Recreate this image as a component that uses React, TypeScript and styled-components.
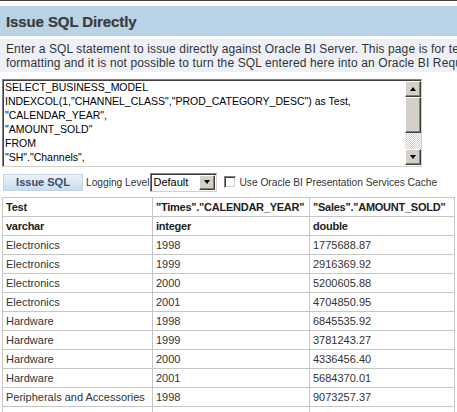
import { createGlobalStyle } from 'styled-components'
import styled from 'styled-components'

const GlobalStyle = createGlobalStyle`
  html, body {
    margin: 0;
    padding: 0;
    background: #fff;
  }
  body {
    font-family: "Liberation Sans", Arial, sans-serif;
    color: #333;
  }
`

/** page wrapper */
const Page = styled.div`
  width: 457px;
  height: 412px;
  overflow: hidden;
  border-top: 1px solid #404040;
  box-sizing: border-box;
`

/** title band */
const TitleBar = styled.div`
  margin-top: 5px;
  height: 30px;
  background: #b9d2e6;
  display: flex;
  align-items: center;
  padding-left: 6px;
`

const Title = styled.h1`
  margin: 0;
  font-size: 15px;
  font-weight: bold;
  color: #3a3a3a;
  letter-spacing: -0.1px;
  -webkit-text-stroke: 0.2px #3a3a3a;
`

/** description band */
const Intro = styled.div`
  margin-top: 3px;
  height: 33px;
  background: #eef0f8;
  padding: 3px 0 0 6px;
  box-sizing: border-box;
  font-size: 12px;
  line-height: 14px;
  letter-spacing: 0.12px;
  color: #333;
  white-space: nowrap;
  overflow: hidden;
`

/** sql editor */
const Editor = styled.div`
  margin: 7px 0 0 2px;
  width: 420px;
  height: 88px;
  box-sizing: border-box;
  display: flex;
  border-top: 1px solid #808080;
  border-left: 1px solid #808080;
  border-right: 1px solid #d4d0c8;
  border-bottom: 1px solid #d4d0c8;
  box-shadow: inset 1px 1px 0 #404040;
  background: #fff;
`

const EditorText = styled.pre`
  flex: 1;
  margin: 0;
  padding: 0 0 0 2px;
  font-family: "Liberation Sans", Arial, sans-serif;
  font-size: 10.5px;
  line-height: 14px;
  color: #000;
  overflow: hidden;
  white-space: pre;
`

const ScrollBar = styled.div`
  width: 16px;
  display: flex;
  flex-direction: column;
  margin: 1px 0 1px 0;
`

const ScrollButton = styled.div`
  height: 16px;
  box-sizing: border-box;
  background: #d4d0c8;
  border-top: 1px solid #fff;
  border-left: 1px solid #fff;
  border-right: 1px solid #404040;
  border-bottom: 1px solid #404040;
  box-shadow: inset -1px -1px 0 #808080;
  display: flex;
  align-items: center;
  justify-content: center;
`

const Thumb = styled(ScrollButton)`
  height: 36px;
`

const Track = styled.div`
  flex: 1;
  background-color: #fff;
  background-image: repeating-conic-gradient(#d4d0c8 0 25%, #fff 0 50%);
  background-size: 2px 2px;
`

const Arrow = styled.div<{ $down?: boolean }>`
  width: 0;
  height: 0;
  border-left: 3.5px solid transparent;
  border-right: 3.5px solid transparent;
  ${p =>
    p.$down
      ? 'border-top: 4px solid #000;'
      : 'border-bottom: 4px solid #000;'}
`

/** controls row */
const Controls = styled.div`
  display: flex;
  align-items: center;
  margin: 6px 0 0 3px;
  height: 18px;
  font-size: 10.2px;
  color: #333;
`

const IssueButton = styled.button`
  width: 80px;
  height: 17px;
  padding: 0;
  border: 1px solid #c4d4e2;
  background: linear-gradient(#eaf2fa, #c9dcec);
  font-family: "Liberation Sans", Arial, sans-serif;
  font-weight: bold;
  font-size: 11px;
  color: #3a4d6a;
`

const Label = styled.span<{ $gap?: number }>`
  margin-left: ${p => p.$gap ?? 3}px;
  white-space: nowrap;
`

const Select = styled.div`
  margin-left: 1px;
  width: 67px;
  height: 19px;
  box-sizing: border-box;
  display: flex;
  border-top: 1px solid #808080;
  border-left: 1px solid #808080;
  border-right: 1px solid #d4d0c8;
  border-bottom: 1px solid #d4d0c8;
  box-shadow: inset 1px 1px 0 #404040;
  background: #fff;
  font-size: 11px;
`

const SelectValue = styled.div`
  flex: 1;
  padding: 2px 0 0 2px;
  color: #000;
`

const SelectButton = styled(ScrollButton)`
  width: 16px;
  height: 15px;
  margin: 1px 1px 1px 0;
`

const CheckBox = styled.span`
  margin-left: 7px;
  width: 12px;
  height: 12px;
  box-sizing: border-box;
  border-top: 1px solid #808080;
  border-left: 1px solid #808080;
  border-right: 1px solid #fff;
  border-bottom: 1px solid #fff;
  box-shadow: inset 1px 1px 0 #404040, inset -1px -1px 0 #d4d0c8;
  background: #fff;
`

/** results grid */
const Grid = styled.table`
  margin: 6px 0 0 2px;
  width: 453px;
  border-collapse: collapse;
  table-layout: fixed;
  font-size: 11px;
  color: #333;
`

const Cell = styled.td<{ $head?: boolean }>`
  border: 1px solid #c6c6c6;
  padding: 0 0 0 3px;
  height: 18px;
  line-height: 14px;
  white-space: nowrap;
  overflow: hidden;
  font-weight: ${p => (p.$head ? 'bold' : 'normal')};
  letter-spacing: ${p => (p.$head ? '-0.25px' : '0')};
  color: ${p => (p.$head ? '#222' : '#333')};
`

const sqlText = `SELECT_BUSINESS_MODEL
INDEXCOL(1,"CHANNEL_CLASS","PROD_CATEGORY_DESC") as Test,
"CALENDAR_YEAR",
"AMOUNT_SOLD"
FROM
"SH"."Channels",`

const rows: [string, string, string][] = [
  ['Electronics', '1998', '1775688.87'],
  ['Electronics', '1999', '2916369.92'],
  ['Electronics', '2000', '5200605.88'],
  ['Electronics', '2001', '4704850.95'],
  ['Hardware', '1998', '6845535.92'],
  ['Hardware', '1999', '3781243.27'],
  ['Hardware', '2000', '4336456.40'],
  ['Hardware', '2001', '5684370.01'],
  ['Peripherals and Accessories', '1998', '9073257.37'],
  ['Peripherals and Accessories', '1999', '8012345.10'],
]

export default function App() {
  return (
    <>
      <GlobalStyle />
      <Page>
        <TitleBar>
          <Title>Issue SQL Directly</Title>
        </TitleBar>
        <Intro>
          Enter a SQL statement to issue directly against Oracle BI Server. This page is for testing
          <br />
          formatting and it is not possible to turn the SQL entered here into an Oracle BI Request.
        </Intro>
        <Editor>
          <EditorText>{sqlText}</EditorText>
          <ScrollBar>
            <ScrollButton>
              <Arrow />
            </ScrollButton>
            <Thumb />
            <Track />
            <ScrollButton>
              <Arrow $down />
            </ScrollButton>
          </ScrollBar>
        </Editor>
        <Controls>
          <IssueButton>Issue SQL</IssueButton>
          <Label>Logging Level</Label>
          <Select>
            <SelectValue>Default</SelectValue>
            <SelectButton>
              <Arrow $down />
            </SelectButton>
          </Select>
          <CheckBox />
          <Label $gap={3}>Use Oracle BI Presentation Services Cache</Label>
        </Controls>
        <Grid>
          <colgroup>
            <col style={{ width: 150 }} />
            <col style={{ width: 157 }} />
            <col />
          </colgroup>
          <tbody>
            <tr>
              <Cell $head>Test</Cell>
              <Cell $head>"Times"."CALENDAR_YEAR"</Cell>
              <Cell $head>"Sales"."AMOUNT_SOLD"</Cell>
            </tr>
            <tr>
              <Cell $head>varchar</Cell>
              <Cell $head>integer</Cell>
              <Cell $head>double</Cell>
            </tr>
            {rows.map((r, i) => (
              <tr key={i}>
                <Cell>{r[0]}</Cell>
                <Cell>{r[1]}</Cell>
                <Cell>{r[2]}</Cell>
              </tr>
            ))}
          </tbody>
        </Grid>
      </Page>
    </>
  )
}
